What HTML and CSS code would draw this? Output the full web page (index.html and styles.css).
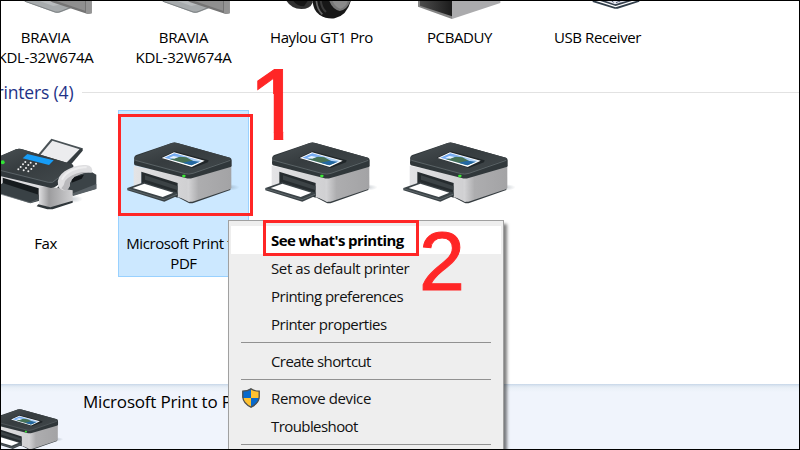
FILE: index.html
```html
<!DOCTYPE html>
<html lang="en">
<head>
<meta charset="utf-8">
<title>Devices and Printers</title>
<link rel="stylesheet" href="styles.css">
</head>
<body>
<svg class="defs" aria-hidden="true">
  <defs>
    <linearGradient id="lid" x1="0" y1="0" x2="1" y2="1"><stop offset="0" stop-color="#4a5154"/><stop offset=".45" stop-color="#363c3f"/><stop offset="1" stop-color="#42494c"/></linearGradient>
    <linearGradient id="front" x1="0" x2="1"><stop offset="0" stop-color="#e4e4e6"/><stop offset="1" stop-color="#cfcfd1"/></linearGradient>
    <linearGradient id="side" x1="0" x2="1"><stop offset="0" stop-color="#d6d6d8"/><stop offset=".25" stop-color="#adadaf"/><stop offset="1" stop-color="#a3a3a5"/></linearGradient>
    <linearGradient id="sky" x1="0" y1="0" x2="1" y2="1"><stop offset="0" stop-color="#5d9bee"/><stop offset="1" stop-color="#d5eafa"/></linearGradient>
    <linearGradient id="dark" x1="0" x2="1"><stop offset="0" stop-color="#4c4c4c"/><stop offset="1" stop-color="#1b1b1b"/></linearGradient>
    <linearGradient id="faxside" x1="0" x2="1"><stop offset="0" stop-color="#dedee0"/><stop offset=".3" stop-color="#9c9c9e"/><stop offset="1" stop-color="#d0d0d2"/></linearGradient>
    <radialGradient id="cast"><stop offset="0" stop-color="#456" stop-opacity=".3"/><stop offset="1" stop-color="#456" stop-opacity="0"/></radialGradient>
    <symbol id="printer" viewBox="0 0 375 240">
      <ellipse cx="325" cy="157" rx="34" ry="10" fill="url(#cast)"/>
      <path d="M172 186L205 203Q212 206 222 203L331 165V157L200 190Z" fill="#353c40"/>
      <path d="M41 92L210 125V200Q205 200 200 197L172 184V148L64 112V150L41 155Z" fill="url(#front)"/>
      <path d="M203 125L334 90V158Q334 161 329 163L222 199Q211 202 203 199Z" fill="url(#side)"/>
      <path d="M64 110L173 144V188L64 152Z" fill="#262c2f"/>
      <path d="M75 121L172 153V165L75 134Z" fill="#3c4346"/>
      <path d="M22 159L72 142L173 173V182L133 200L22 166Z" fill="#3b4347"/>
      <path d="M38 159L73 146L160 173L128 186Z" fill="#fff"/>
      <path d="M22 161L132 194L173 177" fill="none" stroke="#6d7579" stroke-width="2"/>
      <path d="M43 68Q43 62 49 60L155 24Q163 21 172 24L330 68Q335 70 335 76V92Q335 95 329 97L218 129Q207 132 197 129L45 91Q42 89 42 84Z" fill="#30373a"/>
      <path d="M44 66L155 24Q163 21 172 24L330 68Q335 71 328 74L218 114Q206 118 195 115L46 75Q40 71 44 66Z" fill="url(#lid)"/>
      <path d="M46 76L195 116Q206 119 219 115L331 76" fill="none" stroke="#70787c" stroke-width="2"/>
      <path d="M122 68L164 49L266 76L264 82L218 99Z" fill="#202629"/>
      <path d="M125 69L162 52L254 77L215 96Z" fill="#fff"/>
      <path d="M133 68L163 55L247 78L214 91Z" fill="url(#sky)"/>
      <path d="M150 73L180 65L199 67L218 77L230 84L214 91Z" fill="#477257"/>
      <path d="M188 83L215 77L240 80L214 91Z" fill="#2468a3"/>
      <path d="M148 68L160 63L175 66L163 71Z" fill="#e7f3ff"/>
      <rect x="187" y="119" width="9" height="8" rx="2" fill="#3bea35"/>
    </symbol>
    <symbol id="tv" viewBox="-54 3 375 60">
      <path d="M62 0L166 38Q176 40 184 36L217 23L190 5L180 0Z" fill="#a7abad"/>
      <path d="M75 4L166 36Q174 38 183 34L210 23" fill="none" stroke="#7e8385" stroke-width="3"/>
      <path d="M110 0L160 18L204 8V0Z" fill="#b9bcbe"/>
      <path d="M145 0H275V40L263 42L157 7Z" fill="#747474"/>
      <path d="M160 0H255V32Z" fill="#8f8f8f"/>
      <path d="M258 0H275V40L263 42L258 38Z" fill="#949494"/>
    </symbol>
  </defs>
</svg>
<main class="window">
  <section class="grid devices">
    <div class="item"><svg class="pic"><use href="#tv"/></svg><p class="tv-name">BRAVIA<br>KDL-32W674A</p></div>
    <div class="item"><svg class="pic"><use href="#tv"/></svg><p class="tv-name">BRAVIA<br>KDL-32W674A</p></div>
    <div class="item">
      <svg class="pic" viewBox="-6 3 375 60">
        <path d="M78 0Q92 26 124 27Q150 27 158 8V0Z" fill="#303030"/>
        <path d="M98 0Q110 19 132 19L145 0Z" fill="#151515"/>
        <path d="M158 0Q158 30 178 44Q200 58 224 55Q262 46 273 0Z" fill="#171717"/>
        <path d="M169 0Q171 28 187 43" fill="none" stroke="#686868" stroke-width="5"/>
        <path d="M182 0Q184 24 198 36" fill="none" stroke="#393939" stroke-width="6"/>
        <path d="M207 0Q216 27 239 33Q263 29 272 0Z" fill="#777"/>
        <path d="M216 0Q225 22 241 26Q259 22 264 0Z" fill="#8b8b8b"/>
      </svg><p>Haylou GT1 Pro</p></div>
    <div class="item">
      <svg class="pic" viewBox="408 3 375 60">
        <path d="M474 0H576V57L474 20Z" fill="#858585"/>
        <path d="M480 0H576V49L480 17Z" fill="url(#dark)"/>
        <path d="M576 0H721V9L576 57Z" fill="#ababad"/>
      </svg><p>PCBADUY</p></div>
    <div class="item">
      <svg class="pic" viewBox="822 3 375 60">
        <path d="M998 0L1067 22L1138 0V5L1073 26H1064L998 6Z" fill="#303d49"/>
        <path d="M1012 0L1067 18L1125 0Z" fill="#343e4b"/>
        <path d="M1029 0L1065 13L1109 0Z" fill="#e4e6ee"/>
        <path d="M1055 3L1061 7M1074 3L1081 6M1068 8L1075 5" stroke="#555d77" stroke-width="3"/>
      </svg><p>USB Receiver</p></div>
  </section>
  <header class="group"><h2>Printers (4)</h2><span class="rule"></span></header>
  <section class="grid printers">
    <div class="item">
      <svg class="pic" viewBox="-54 75 375 240">
        <ellipse cx="215" cy="267" rx="34" ry="12" fill="url(#cast)"/>
        <path d="M110 139L154 86L248 115L207 166Z" fill="#4a5256"/>
        <path d="M118 139L157 92L239 118L196 161Z" fill="#ececee"/>
        <path d="M199 161L240 117L248 115V122L211 166Z" fill="#343b3f"/>
        <path d="M203 186L276 187L289 194V236L216 257L170 236Z" fill="#3b4347"/>
        <path d="M219 250L289 222V237L219 258Z" fill="#596166"/>
        <path d="M-20 190L153 224V294L117 286V240L8 208V235L-20 230Z" fill="#dddde0"/>
        <path d="M148 230L218 241V277L159 294L117 285V230Z" fill="url(#faxside)"/>
        <path d="M8 203L116 235V273L8 235Z" fill="#161b1e"/>
        <path d="M-10 232L8 219L116 254V273L91 280L-10 248Z" fill="#394145"/>
        <path d="M-10 249L90 278L115 269" fill="none" stroke="#697175" stroke-width="2"/>
        <path d="M115 283L151 292L218 272V278L158 298H142L110 289Z" fill="#30373b"/>
        <path d="M-20 146L48 118Q55 115 64 117L216 163Q225 168 216 177L183 214Q171 233 153 234L-20 193Z" fill="#32393d"/>
        <path d="M-20 148L48 118Q55 115 64 117L216 163Q222 168 213 174L168 210Q160 220 145 216L-20 176Z" fill="url(#lid)"/>
        <path d="M-20 176L145 217Q159 221 168 209L213 176" fill="none" stroke="#70797d" stroke-width="2"/>
        <path d="M68 145L82 132L161 151L147 165Z" fill="#179cf5"/>
        <g fill="#eee"><circle cx="76" cy="156" r="3"/><circle cx="92" cy="158" r="3"/><circle cx="108" cy="161" r="3"/><circle cx="69" cy="163" r="3"/><circle cx="85" cy="165" r="3"/><circle cx="101" cy="168" r="3"/><circle cx="62" cy="171" r="3"/><circle cx="78" cy="174" r="3"/><circle cx="94" cy="177" r="3"/><circle cx="55" cy="178" r="3"/><circle cx="71" cy="181" r="3"/><circle cx="85" cy="184" r="3"/></g>
        <path d="M174 223Q170 201 194 184Q228 162 258 165Q282 168 275 188Q257 185 238 193Q216 202 210 218Q210 237 195 242Q174 239 174 223Z" fill="#dedee0"/>
        <path d="M186 209Q193 191 217 180Q240 170 260 172" fill="none" stroke="#ededee" stroke-width="6"/>
        <path d="M184 235Q193 227 195 213Q211 193 246 186L275 188Q252 186 231 197Q216 205 210 218Q210 237 195 242Z" fill="#b9b9bc"/>
        <path d="M216 209L224 200L252 194L245 206L215 218Z" fill="#111518"/>
        <circle cx="8" cy="157" r="6" fill="#31e436"/>
      </svg><p>Fax</p></div>
    <div class="item selected"><svg class="pic"><use href="#printer"/></svg><p>Microsoft Print to<br>PDF</p></div>
    <div class="item"><svg class="pic"><use href="#printer"/></svg></div>
    <div class="item"><svg class="pic"><use href="#printer"/></svg></div>
  </section>
  <footer class="details"><svg class="thumb"><use href="#printer"/></svg><span>Microsoft Print to PDF</span></footer>
</main>
<nav class="menu">
  <div class="row active tight">See what's printing</div>
  <div class="row loose">Set as default printer</div>
  <div class="row">Printing preferences</div>
  <div class="row">Printer properties</div>
  <hr>
  <div class="row tight">Create shortcut</div>
  <hr>
  <div class="row loose">
    <svg class="shield" viewBox="0 0 18 20"><path d="M9 .5Q5.500 3 .5 3V9Q1 15.500 9 19.500Q17 15.500 17.500 9V3Q12.500 3 9 .5Z" fill="#ffc12f"/><path d="M9 .5Q5.500 3 .5 3V10H9ZM9 10V19.500Q16.500 15.500 17.400 10Z" fill="#0869cb"/><path d="M9 .9Q5.500 3.200 .8 3.200V9Q1.200 15.300 9 19.200Q16.800 15.300 17.200 9V3.200Q12.500 3.200 9 .9Z" fill="none" stroke="#4d5053" stroke-width="1.300"/></svg>
    Remove device</div>
  <div class="row tight">Troubleshoot</div>
  <hr>
</nav>
<div class="mark box-one"></div>
<div class="mark box-two"></div>
<div class="number one">1</div>
<div class="number two">2</div>
<div class="frame"></div>
</body>
</html>
```

FILE: styles.css
```css
* { box-sizing: border-box; }
body {
  margin: 0;
  width: 800px;
  height: 450px;
  position: relative;
  overflow: hidden;
  background: #fff;
  color: #000;
  font: 15px/20px "Open Sans", "Noto Sans", sans-serif;
}
p, h2 { margin: 0; font-weight: 400; }
.defs { position: absolute; width: 0; height: 0; }
.window {
  display: flex;
  flex-direction: column;
  height: 450px;
  padding-top: 1px;
  overflow: hidden;
}
.window > * { flex-shrink: 0; }
.grid {
  display: grid;
  grid-template-columns: repeat(5, 131px);
  column-gap: 7px;
  margin-left: -20px;
}
.item { display: flex; flex-direction: column; align-items: center; white-space: nowrap; }
.item p { text-align: center; letter-spacing: -0.41px; }
.item .tv-name { letter-spacing: -0.27px; }
.pic { width: 125px; margin-right: 2px; flex: none; }
.devices { height: 75px; }
.devices .pic { height: 20px; }
.devices p { margin-top: 6px; }
.group {
  display: flex;
  align-items: center;
  gap: 9px;
  height: 33px;
  margin: 0 0 1px -14px;
}
.group h2 { font-size: 17.5px; color: #1e3287; letter-spacing: -0.15px; padding-bottom: 2px; }
.rule { flex: 1; height: 1px; background: #e2e2e2; }
.printers { height: 167px; }
.printers .item { padding-top: 24px; border: 1px solid transparent; }
.printers .pic { height: 80px; }
.printers p { margin-top: 18px; }
.printers .selected { background: #cce8ff; border-color: #99d1ff; }
.details {
  display: flex;
  height: 66px;
  overflow: hidden;
  margin-top: 107px;
  background: linear-gradient(#c6d6e8, #dfe8f2 2px, #eaf0f7 4px, #f0f4fc 8px);
  font-size: 17px;
  letter-spacing: -0.2px;
  white-space: nowrap;
}
.thumb { width: 84px; height: 54px; margin: 20px 16px 0 -17px; flex: none; }
.details span { margin-top: 8px; }
.menu {
  position: absolute;
  left: 228px;
  top: 220px;
  width: 276px;
  height: 240px;
  padding: 5px 2px;
  background: #eee;
  border: 1px solid #a0a0a0;
  box-shadow: 3px 4px 3px rgba(0, 0, 0, .5);
  white-space: nowrap;
}
.row { display: flex; align-items: center; height: 28px; padding: 0 0 0 40px; letter-spacing: -0.51px; color: #111; }
.tight { letter-spacing: -0.58px; }
.loose { letter-spacing: -0.38px; }
.active { background: #fff; color: #000; font-weight: 700; }
.shield { width: 18px; height: 20px; margin: 0 11px 0 -29px; }
.menu hr { height: 1px; margin: 4px 10px; border: 0; background: #919191; }
.mark { position: absolute; border: 3px solid #ff2626; }
.box-one { left: 118px; top: 114px; width: 135px; height: 102px; }
.box-two { left: 263px; top: 220px; width: 156px; height: 36px; }
.number { position: absolute; color: #ff2626; font-family: "Liberation Sans", Arial, sans-serif; }
.one {
  left: 248px;
  top: 55px;
  font-size: 102px;
  line-height: 100px;
  -webkit-text-stroke: 1px #ff2626;
  clip-path: polygon(0 0, 35.200px 0, 35.200px 85px, 25.800px 85px, 25.800px 39px, 0 39px);
}
.two { left: 419px; top: 218.500px; font-size: 82.500px; line-height: 84px; -webkit-text-stroke: 1px #ff2626; }
.frame { position: absolute; inset: 0; border: 1px solid #000; }
```
